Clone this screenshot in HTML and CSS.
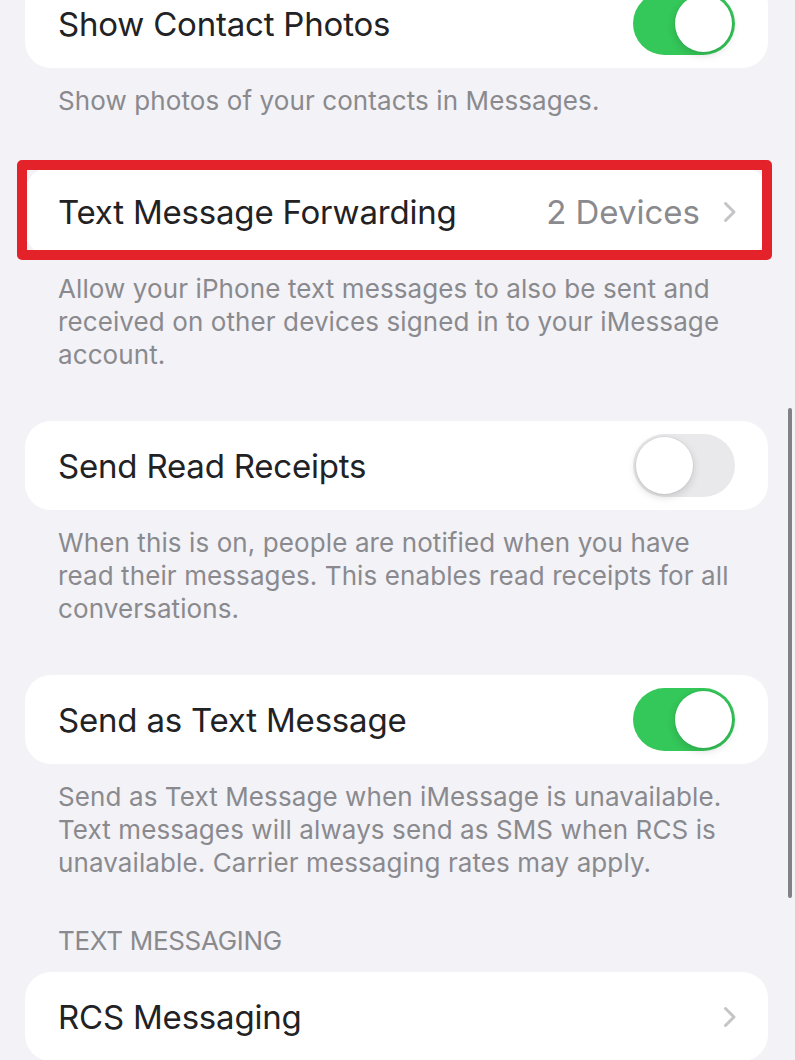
FILE: index.html
```html
<!DOCTYPE html>
<html lang="en">
<head>
<meta charset="utf-8">
<title>Messages</title>
<link rel="stylesheet" href="styles.css">
</head>
<body>
<main class="settings">
  <section class="group">
    <div class="cell">
      <span class="label">Show Contact Photos</span>
      <span class="switch on"><span class="knob"></span></span>
    </div>
    <p class="note">Show photos of your contacts in Messages.</p>
  </section>

  <section class="group">
    <div class="cell marked">
      <span class="label">Text Message Forwarding</span>
      <span class="detail">
        <span class="value">2 Devices</span>
        <svg class="chevron" width="14" height="22" viewBox="0 0 14 22"><path d="M2.5 2.5 L11 11 L2.5 19.5" fill="none" stroke="#c5c5c8" stroke-width="3" stroke-linecap="round" stroke-linejoin="round"/></svg>
      </span>
      <span class="highlight"></span>
    </div>
    <p class="note">Allow your iPhone text messages to also be sent and received on other devices signed in to your iMessage account.</p>
  </section>

  <section class="group">
    <div class="cell">
      <span class="label">Send Read Receipts</span>
      <span class="switch"><span class="knob"></span></span>
    </div>
    <p class="note">When this is on, people are notified when you have read their messages. This enables read receipts for all conversations.</p>
  </section>

  <section class="group">
    <div class="cell">
      <span class="label">Send as Text Message</span>
      <span class="switch on"><span class="knob"></span></span>
    </div>
    <p class="note">Send as Text Message when iMessage is unavailable. Text messages will always send as SMS when RCS is unavailable. Carrier messaging rates may apply.</p>
  </section>

  <h2 class="section-title">TEXT MESSAGING</h2>
  <section class="group">
    <div class="cell">
      <span class="label">RCS Messaging</span>
      <span class="detail">
        <svg class="chevron" width="14" height="22" viewBox="0 0 14 22"><path d="M2.5 2.5 L11 11 L2.5 19.5" fill="none" stroke="#c5c5c8" stroke-width="3" stroke-linecap="round" stroke-linejoin="round"/></svg>
      </span>
    </div>
  </section>
</main>
<div class="scroll-indicator"></div>
</body>
</html>
```

FILE: styles.css
```css
html, body {
  margin: 0;
  padding: 0;
  background: #f2f2f7;
  overflow: hidden;
}

body {
  font-family: Inter, "Noto Sans", "Liberation Sans", sans-serif;
  color: #1f1f21;
  height: 1060px;
}

.settings {
  display: flex;
  flex-direction: column;
  margin-top: -21px;
  padding: 0 27px 0 25px;
}

.group {
  display: flex;
  flex-direction: column;
  margin-bottom: 50px;
}

.cell {
  position: relative;
  display: flex;
  align-items: center;
  justify-content: space-between;
  height: 89px;
  padding: 0 33px;
  background: #ffffff;
  border-radius: 26px;
}

.label {
  font-size: 33px;
  letter-spacing: -0.2px;
  color: #222224;
}

.detail {
  display: flex;
  align-items: center;
  gap: 23px;
  margin-right: -2px;
}

.value {
  font-size: 33px;
  letter-spacing: 0;
  color: #8a8a8e;
}

.chevron {
  display: block;
}

.highlight {
  position: absolute;
  top: -7px;
  left: -8px;
  right: -4px;
  bottom: -4px;
  border: 10px solid #e4222a;
  border-radius: 5px;
  pointer-events: none;
}

.switch {
  position: relative;
  display: block;
  width: 102px;
  height: 63px;
  border-radius: 32px;
  background: #e9e9eb;
}

.switch .knob {
  position: absolute;
  top: 3px;
  left: 3px;
  width: 57px;
  height: 57px;
  border-radius: 50%;
  background: #ffffff;
  box-shadow: 0 3px 8px rgba(0, 0, 0, 0.15), 0 0 0 1px rgba(0, 0, 0, 0.04);
}

.switch.on {
  background: #34c759;
}

.switch.on .knob {
  left: auto;
  right: 3px;
}

.note {
  margin: 0;
  padding: 16px 33px 0;
  font-size: 26px;
  letter-spacing: 0.1px;
  line-height: 33px;
  color: #8a8a8e;
}

.section-title {
  margin: -3px 0 16px;
  padding: 0 33px;
  font-size: 26px;
  line-height: 30px;
  font-weight: 400;
  color: #8a8a8e;
  letter-spacing: -0.3px;
}

.scroll-indicator {
  position: absolute;
  top: 408px;
  left: 788px;
  width: 4px;
  height: 490px;
  border-radius: 2px;
  background: #828286;
}
```
